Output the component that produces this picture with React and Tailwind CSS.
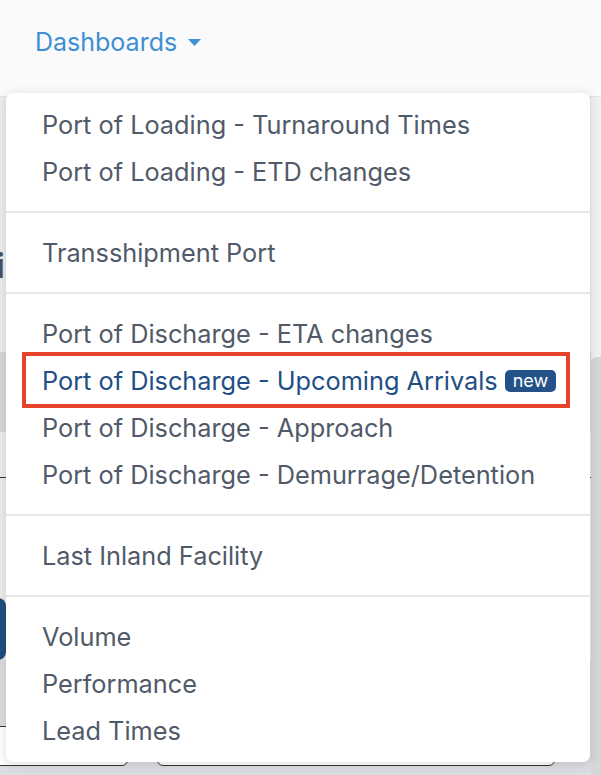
import React from "react";

const groups = [
  ["Port of Loading - Turnaround Times", "Port of Loading - ETD changes"],
  ["Transshipment Port"],
  [
    "Port of Discharge - ETA changes",
    "Port of Discharge - Upcoming Arrivals",
    "Port of Discharge - Approach",
    "Port of Discharge - Demurrage/Detention",
  ],
  ["Last Inland Facility"],
  ["Volume", "Performance", "Lead Times"],
];

const highlighted = "Port of Discharge - Upcoming Arrivals";

function MenuItem({ label }) {
  const active = label === highlighted;
  return (
    <a
      href="#"
      className={
        "flex items-center h-[47px] px-[36px] text-[25.3px] whitespace-nowrap " +
        (active ? "text-[#1f4f85]" : "text-[#505a68]")
      }
    >
      {label}
      {active && (
        <span className="ml-[7px] h-[22px] px-[8px] flex items-center rounded-[5px] bg-[#245288] text-white text-[18px] leading-none">
          new
        </span>
      )}
    </a>
  );
}

export default function App() {
  return (
    <div className="relative w-[601px] h-[775px] overflow-hidden bg-[#ececec] font-['Inter',sans-serif]">
      <header className="h-[97px] bg-[#fafafa] border-b border-[#e4e4e4] flex items-center pl-[35px] pb-[11px]">
        <button className="flex items-center gap-[11px] text-[25px] text-[#3d8fd6]">
          Dashboards
          <svg width="13" height="7" viewBox="0 0 13 7">
            <path d="M0 0h13L6.5 7z" fill="#3d8fd6" />
          </svg>
        </button>
      </header>

      <div className="grid grid-cols-[591px_10px]">
        <div className="flex flex-col">
          <div className="h-[255px] pt-[152px]">
            <div className="w-[5px] overflow-hidden flex justify-end">
              <span className="text-[34px] font-semibold text-[#4a5260] leading-none">i</span>
            </div>
          </div>
          <div className="h-[80px] bg-[#d6d7db]" />
          <div className="h-[46px] border-b border-[#333]" />
          <div className="h-[120px]" />
          <div className="w-[40px] h-[62px] -ml-[34px] rounded-[8px] bg-[#1f4e7e]" />
          <div className="h-[115px] bg-[#dcdde0] flex gap-[29px] items-end pb-[9px] overflow-hidden">
            <div className="shrink-0 w-[168px] h-[40px] -ml-[40px] bg-white border border-[#333] rounded-[6px]" />
            <div className="shrink-0 w-[398px] h-[40px] bg-white border border-[#333] rounded-[6px]" />
          </div>
        </div>
        <div className="flex flex-col">
          <div className="h-[260px] bg-[#f1f1f1]" />
          <div className="flex-1 bg-[#d6d7db] rounded-tl-[6px]" />
        </div>
      </div>

      <nav className="absolute left-[6px] top-[93px] w-[584px] h-[669px] bg-white rounded-[7px] shadow-[0_2px_12px_rgba(0,0,0,0.14)] pt-[8px]">
        {groups.map((g, i) => (
          <div key={i}>
            {i > 0 && <div className="h-[2px] bg-[#e7e7e7] my-[16px]" />}
            {g.map((label) => (
              <MenuItem key={label} label={label} />
            ))}
          </div>
        ))}
      </nav>

      <div className="absolute left-[22px] top-[352px] w-[548px] h-[56px] border-[4px] border-[#e5422b] pointer-events-none" />
    </div>
  );
}
